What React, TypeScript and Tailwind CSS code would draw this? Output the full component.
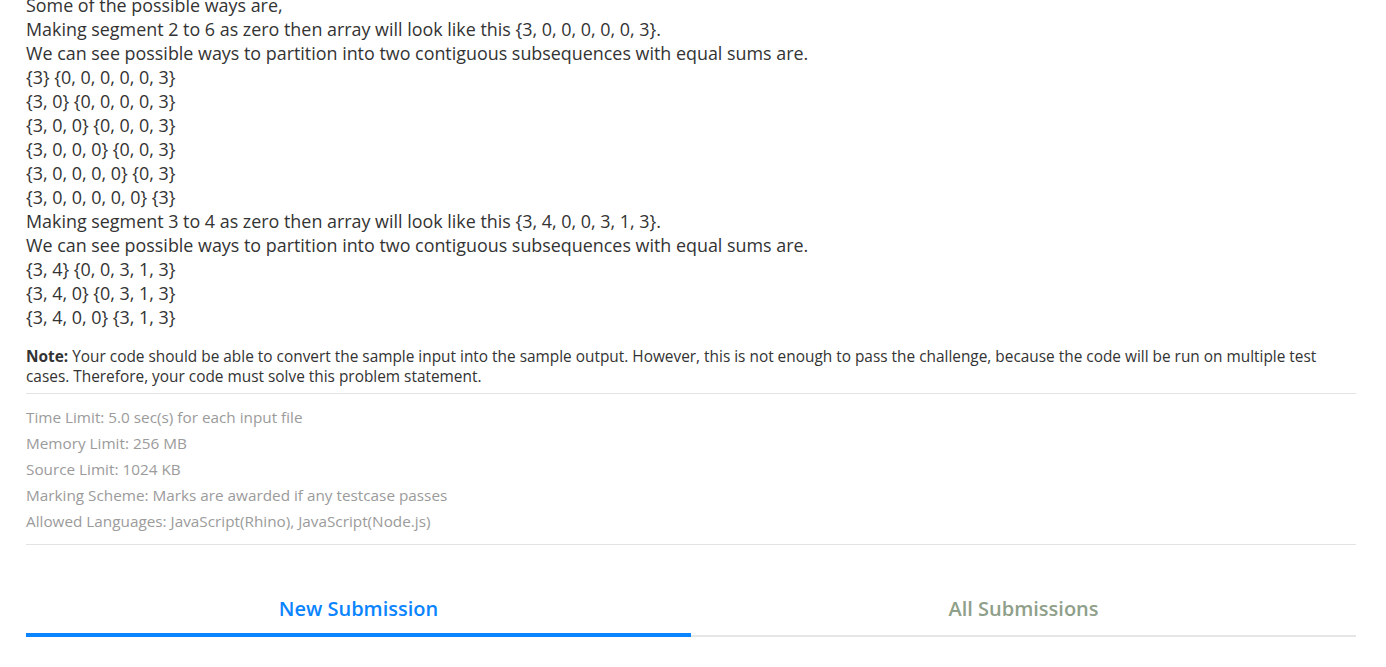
const ways1 = [
  "{3} {0, 0, 0, 0, 0, 3}",
  "{3, 0} {0, 0, 0, 0, 3}",
  "{3, 0, 0} {0, 0, 0, 3}",
  "{3, 0, 0, 0} {0, 0, 3}",
  "{3, 0, 0, 0, 0} {0, 3}",
  "{3, 0, 0, 0, 0, 0} {3}",
];

const ways2 = [
  "{3, 4} {0, 0, 3, 1, 3}",
  "{3, 4, 0} {0, 3, 1, 3}",
  "{3, 4, 0, 0} {3, 1, 3}",
];

const limits = [
  "Time Limit: 5.0 sec(s) for each input file",
  "Memory Limit: 256 MB",
  "Source Limit: 1024 KB",
  "Marking Scheme: Marks are awarded if any testcase passes",
  "Allowed Languages: JavaScript(Rhino), JavaScript(Node.js)",
];

export default function App() {
  return (
    <div
      className="h-[667px] overflow-hidden bg-white pl-[26px] pr-[30px]"
      style={{ fontFamily: '"Open Sans", "Noto Sans", sans-serif' }}
    >
      <div className="-mt-[7px] text-[17.9px] leading-[24px] text-[#333333]">
        <div>Some of the possible ways are,</div>
        <div>Making segment 2 to 6 as zero then array will look like this {"{3, 0, 0, 0, 0, 0, 3}"}.</div>
        <div>We can see possible ways to partition into two contiguous subsequences with equal sums are.</div>
        {ways1.map((w) => (
          <div key={w}>{w}</div>
        ))}
        <div>Making segment 3 to 4 as zero then array will look like this {"{3, 4, 0, 0, 3, 1, 3}"}.</div>
        <div>We can see possible ways to partition into two contiguous subsequences with equal sums are.</div>
        {ways2.map((w) => (
          <div key={w}>{w}</div>
        ))}
      </div>

      <p className="mt-[18px] text-[15.4px] leading-[20px] text-[#333333]">
        <span className="font-bold">Note:</span> Your code should be able to convert the sample input into the sample
        output. However, this is not enough to pass the challenge, because the code will be run on multiple test cases.
        Therefore, your code must solve this problem statement.
      </p>

      <div className="mt-[6px] border-t border-[#e3e3e3] pt-[10px] pb-[10px] text-[15.3px] leading-[26px] text-[#9b9b9b]">
        {limits.map((l) => (
          <div key={l}>{l}</div>
        ))}
      </div>

      <div className="flex items-end border-t border-[#e3e3e3] pt-[51px]">
        <div className="flex-1 border-b-4 border-[#0a84ff] pb-[11px] text-center text-[20px] leading-[26px] font-semibold text-[#0a84ff]">
          New Submission
        </div>
        <div className="flex-1 border-b-2 border-[#e6e6e6] pb-[13px] text-center text-[20px] leading-[26px] font-semibold text-[#8fa08a]">
          All Submissions
        </div>
      </div>
    </div>
  );
}
